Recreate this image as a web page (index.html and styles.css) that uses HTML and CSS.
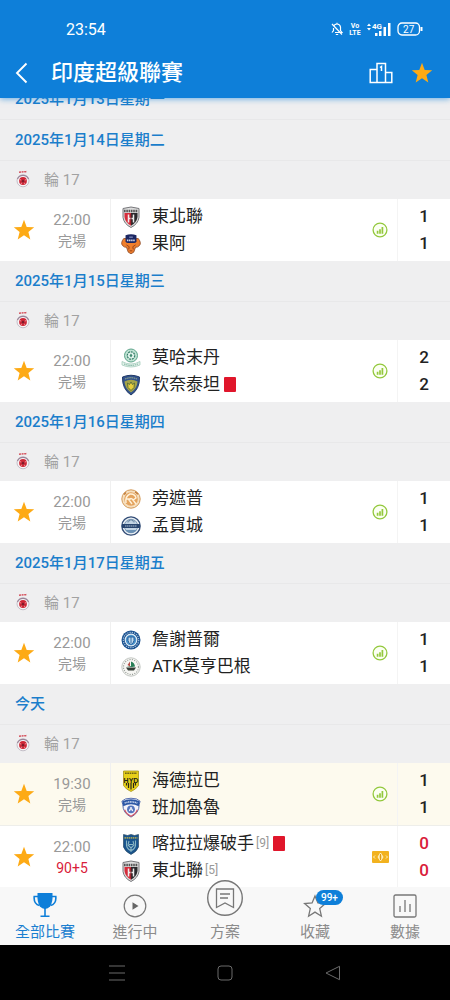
FILE: index.html
```html
<!DOCTYPE html>
<html lang="zh-Hant">
<head>
<meta charset="utf-8">
<meta name="viewport" content="width=device-width, initial-scale=1">
<title>印度超級聯賽</title>
<link rel="stylesheet" href="styles.css">
</head>
<body>
<svg class="sprite" aria-hidden="true">
  <symbol id="star" viewBox="0 0 22 22"><path fill="#fdaa15" d="M11 .8l2.7 7.1 7.5.4-5.8 4.8 1.9 7.3L11 16.3l-6.3 4.1 1.9-7.3L.8 8.3l7.5-.4z"/></symbol>
  <symbol id="isl" viewBox="0 0 16 18">
    <path d="M4 2.200l8-.6" stroke="#d65560" stroke-width="1.500" stroke-dasharray="2 .6"/>
    <circle cx="8" cy="10.800" r="6" fill="#f7f5f6" stroke="#c4bfc8" stroke-width="1"/>
    <path d="M2.500 9a6 6 0 0 1 11 0" fill="none" stroke="#9a8498" stroke-width="1.200"/>
    <circle cx="8" cy="11" r="3.900" fill="#cf2636"/>
    <path d="M8 9.600l1.400 1.100-.5 1.700H7.100l-.5-1.700z" fill="#7d1b2a"/>
    <path d="M4.700 9.500l1.500.6M11.300 9.500l-1.500.6M6 14l.8-1.300M10 14l-.8-1.300" stroke="#f3c8cc" stroke-width=".7"/>
  </symbol>
  <symbol id="stats" viewBox="0 0 16 16">
    <circle cx="8" cy="8" r="6.900" fill="#fbfff2" stroke="#93c83d" stroke-width="1.300"/>
    <path d="M5.600 8.800v3M8 7.200v4.600M10.400 5v6.800" stroke="#93c83d" stroke-width="1.700"/>
  </symbol>
  <symbol id="northeast" viewBox="0 0 20 22">
    <path d="M2 2.5Q10-.5 18 2.5v9Q17 18 10 21.500 3 18 2 11.500z" fill="#ddd" stroke="#77777b"/>
    <path d="M3.500 7H10v12.700Q4.300 16.500 3.500 11z" fill="#d52c3b"/>
    <path d="M10 7h6.500v4Q15.700 16.500 10 19.700z" fill="#29292c"/>
    <path d="M3 5h14" stroke="#555" stroke-width="2.400" stroke-dasharray="1.600 .7"/>
    <path d="M7.500 8.500v8M12.500 8.500v8M7.500 12.500h5" stroke="#eee" stroke-width="1.500"/>
    <path d="M10 8v10" stroke="#6b2026" stroke-width="1"/>
  </symbol>
  <symbol id="goa" viewBox="0 0 22 22">
    <path d="M3 5Q-1 10 2 13q2 2 4 1.500L8 20l3 1.800L14 20l2-5.500q2 .5 4-1.500 3-3-1-8z" fill="#f07f2c" stroke="#8c4a29" stroke-width=".9"/>
    <path d="M5 1.500Q11-.8 17 1.500V8q0 2-2.500 2h-7Q5 10 5 8z" fill="#1c2763"/>
    <path d="M6.500 7h9" stroke="#d1d4e6" stroke-width="2" stroke-dasharray="1.700 .6"/>
    <path d="M9 3.500h4" stroke="#7882b5" stroke-width="1.500"/>
    <path d="M6 12l3 2-.5 3M16 12l-3 2 .5 3M9.500 18.500h3" fill="none" stroke="#91401d"/>
  </symbol>
  <symbol id="mohammedan" viewBox="0 0 20 20">
    <circle cx="10" cy="7.500" r="6.500" fill="#bfe2d3" stroke="#5ea58b"/>
    <circle cx="10" cy="7.500" r="3.700" fill="#e5f5ee" stroke="#347d67" stroke-width="1.200" stroke-dasharray="2 .8"/>
    <path d="M8.500 7.500l1.500-2 1.500 2-1.500 2z" fill="#438b73"/>
    <path d="M1 13.500q9 5 18 0v3.500q-9 4-18 0z" fill="#e3f1ea" stroke="#9bc7b6" stroke-width=".7"/>
    <path d="M3 16q7 2.800 14 0" fill="none" stroke="#6faa95" stroke-dasharray="1.400 .8"/>
  </symbol>
  <symbol id="chennai" viewBox="0 0 20 22">
    <path d="M1.500 3Q10-.5 18.500 3 19 15 10 21 1 15 1.500 3z" fill="#33538d" stroke="#213a68"/>
    <path d="M3.500 7.500Q10 4 16.500 7.500 16 14.500 10 18.500 4 14.500 3.500 7.500z" fill="#a5a448"/>
    <path d="M4 5q6-2.500 12 0" stroke="#a7bb8b" stroke-dasharray="1.500 .7" fill="none"/>
    <path d="M6.500 9l2 1.500L10 8l1.500 2.500 2-1.500-.5 4.500-3 3-3-3z" fill="#e5cd3c" stroke="#4a6238" stroke-width=".8"/>
  </symbol>
  <symbol id="punjab" viewBox="0 0 20 20">
    <circle cx="10" cy="10" r="9.200" fill="#f5dfbf" stroke="#d49a59"/>
    <circle cx="10" cy="10" r="6.800" fill="#e4a35e"/>
    <path d="M3 5.500l2-2M14 2.800l3 2.500" stroke="#bf7b3a" stroke-width="1.400"/>
    <path d="M5 14q-1-7 4-9 5-.5 6 4l-3 2q-2-3-4 0l3 4M12 11l3 4M5 10h5" fill="none" stroke="#fff2da" stroke-width="1.400"/>
  </symbol>
  <symbol id="mumbai" viewBox="0 0 20 20">
    <circle cx="10" cy="10" r="9.200" fill="#e9eff4" stroke="#334d77" stroke-width="1.300"/>
    <circle cx="10" cy="10" r="6.700" fill="#c3d4e4" stroke="#819bb5"/>
    <path d="M4.300 14a7 7 0 0 0 11.400 0z" fill="#6a91b5"/>
    <path d="M1 8h18v4H1z" fill="#29456f"/><path d="M4 10h12" stroke="#a7bbcd" stroke-width="1.200" stroke-dasharray="1.500 .5"/>
    <path d="M7 6.500V5h1.500V4h3v1H13v1.500" fill="none" stroke="#6d89a5"/>
  </symbol>
  <symbol id="jamshedpur" viewBox="0 0 20 20">
    <circle cx="10" cy="10" r="9.500" fill="#174f8f"/>
    <circle cx="10" cy="10" r="7.700" fill="none" stroke="#a4bdd8" stroke-width="1.200" stroke-dasharray="1.300 1"/>
    <circle cx="10" cy="10" r="5.800" fill="#4a93cc" stroke="#e5eef5" stroke-width="1.200"/>
    <path d="M7 7h6v3.500q0 2.500-3 4-3-1.500-3-4z" fill="#c3dbed" stroke="#215c9c"/><path d="M10 7v6" stroke="#326ca7"/>
  </symbol>
  <symbol id="atk" viewBox="0 0 20 20">
    <circle cx="10" cy="10" r="9.200" fill="#f6f6f3" stroke="#c3c7c3"/>
    <circle cx="10" cy="10" r="7.500" fill="none" stroke="#999f9a" stroke-width="1.200" stroke-dasharray="1.100 1.300"/>
    <path d="M5.500 9.500L10 9V4.500q3.500 1 4 5l-3 .5z" fill="#267e56"/>
    <path d="M9 4.500v5L6.500 8z" fill="#b64c46"/><path d="M5 10.500h10l-2 3H7z" fill="#343d36"/>
  </symbol>
  <symbol id="bengaluru" viewBox="0 0 22 22">
    <path d="M1 3.500L5 1q6-1.500 12 0l4 2.500-1 4q0 9-9 13.500Q2 16.500 2 7.500z" fill="#f3f3fa" stroke="#4560a9"/>
    <path d="M1.500 3.500Q11-.5 20.500 3.500l-1 5.500Q11 5 2.500 9z" fill="#2b57a5"/>
    <path d="M4 5.500q7-2.500 14 0" fill="none" stroke="#cfdaef" stroke-width="1.700" stroke-dasharray="1.300 .6"/>
    <circle cx="11" cy="12.500" r="4.300" fill="#5475bd"/><path d="M9 14.500l2-4.500 2 4.500M9.500 13h3" stroke="#fff" fill="none"/>
    <path d="M4 13q2 5 7 7 5-2 7-7" fill="none" stroke="#d6505d" stroke-width="1.200"/>
  </symbol>
  <symbol id="kerala" viewBox="0 0 20 22">
    <path d="M2.500 1.500l4 1 3.500-1 3.500 1 4-1V14Q16 18.500 10 21.500 4 18.500 2.500 14z" fill="#19548d" stroke="#2a4b66" stroke-width=".7"/>
    <path d="M3.500 4.800h13" stroke="#a1a05b" stroke-width="1.800" stroke-dasharray="1.500 .6"/>
    <path d="M5.500 7.500v5q1 4 4.500 5 3.500-1 4.500-5v-5M8 8l-1 4 3 3 3-3-1-4M8 11.500h4M10 15v4" fill="none" stroke="#8ab6c4" stroke-width="1.100"/>
  </symbol>
</svg>

<header class="header">
  <div class="status">
    <span class="clock">23:54</span>
    <div class="status-icons">
      <svg width="12" height="14" viewBox="0 0 12 14" fill="none" stroke="#fff" stroke-width="1.200"><path d="M2.500 5Q3 2 6 2t3.500 3v3.500L11 10.500H4M2.500 6v2.500L1 10.500M4.800 12.500h2.400M6 2V.8M1 2l10 10.500"/></svg>
      <svg width="12" height="14" viewBox="0 0 12 14"><text class="volte" x="6" y="6" text-anchor="middle">Vo</text><text class="volte" x="6" y="13" text-anchor="middle">LTE</text></svg>
      <svg width="24" height="16" viewBox="0 0 24 16" fill="#fff"><path d="M0 5l2-2.500L4 5zM0 7l2 2.500L4 7z"/><text class="network" x="5" y="8">4G</text><path d="M8 12h2.500v3H8zM12 10h2.500v5H12zM16.500 6H19v9h-2.500zM21 2h2.500v13H21z"/></svg>
      <svg width="26" height="14" viewBox="0 0 26 14" fill="none" stroke="#fff" stroke-width="1.300"><rect x="1" y="1" width="21.500" height="12" rx="4"/><path d="M24.500 5v4" stroke-width="2"/><text class="battery" x="11.700" y="10.500" text-anchor="middle">27</text></svg>
    </div>
  </div>
  <div class="titlebar">
    <button class="icon-button" aria-label="返回"><svg width="14" height="22" viewBox="0 0 14 22" fill="none" stroke="#fff" stroke-width="1.900"><path d="M11.500 1.500L2 11l9.500 9.500"/></svg></button>
    <h1>印度超級聯賽</h1>
    <div class="actions">
      <button class="icon-button" aria-label="積分榜"><svg width="24" height="22" viewBox="0 0 24 22" fill="none" stroke="#fff" stroke-width="1.500"><path d="M8 20.500V1.500h8.500v19M8 7.500H1.200v13h21.600v-10h-6.300"/><path d="M11 5.500l1.500-1V9"/></svg></button>
      <button class="icon-button" aria-label="收藏聯賽"><svg width="22" height="22"><use href="#star"/></svg></button>
    </div>
  </div>
</header>

<main class="viewport">
  <div class="list">
    <h2 class="date">2025年1月13日星期一</h2>

    <h2 class="date">2025年1月14日星期二</h2>
    <div class="round"><svg width="16" height="18"><use href="#isl"/></svg>輪 17</div>
    <article class="match">
      <button class="fav" aria-label="收藏"><svg width="22" height="22"><use href="#star"/></svg></button>
      <div class="when"><time>22:00</time><span>完場</span></div>
      <div class="teams">
        <div class="team"><svg><use href="#northeast"/></svg>東北聯</div>
        <div class="team"><svg><use href="#goa"/></svg>果阿</div>
      </div>
      <svg class="info" width="16" height="16"><use href="#stats"/></svg>
      <div class="score"><span>1</span><span>1</span></div>
    </article>

    <h2 class="date">2025年1月15日星期三</h2>
    <div class="round"><svg width="16" height="18"><use href="#isl"/></svg>輪 17</div>
    <article class="match">
      <button class="fav" aria-label="收藏"><svg width="22" height="22"><use href="#star"/></svg></button>
      <div class="when"><time>22:00</time><span>完場</span></div>
      <div class="teams">
        <div class="team"><svg><use href="#mohammedan"/></svg>莫哈末丹</div>
        <div class="team"><svg><use href="#chennai"/></svg>钦奈泰坦<i class="red-card"></i></div>
      </div>
      <svg class="info" width="16" height="16"><use href="#stats"/></svg>
      <div class="score"><span>2</span><span>2</span></div>
    </article>

    <h2 class="date">2025年1月16日星期四</h2>
    <div class="round"><svg width="16" height="18"><use href="#isl"/></svg>輪 17</div>
    <article class="match">
      <button class="fav" aria-label="收藏"><svg width="22" height="22"><use href="#star"/></svg></button>
      <div class="when"><time>22:00</time><span>完場</span></div>
      <div class="teams">
        <div class="team"><svg><use href="#punjab"/></svg>旁遮普</div>
        <div class="team"><svg><use href="#mumbai"/></svg>孟買城</div>
      </div>
      <svg class="info" width="16" height="16"><use href="#stats"/></svg>
      <div class="score"><span>1</span><span>1</span></div>
    </article>

    <h2 class="date">2025年1月17日星期五</h2>
    <div class="round"><svg width="16" height="18"><use href="#isl"/></svg>輪 17</div>
    <article class="match">
      <button class="fav" aria-label="收藏"><svg width="22" height="22"><use href="#star"/></svg></button>
      <div class="when"><time>22:00</time><span>完場</span></div>
      <div class="teams">
        <div class="team"><svg><use href="#jamshedpur"/></svg>詹謝普爾</div>
        <div class="team"><svg><use href="#atk"/></svg>ATK莫亨巴根</div>
      </div>
      <svg class="info" width="16" height="16"><use href="#stats"/></svg>
      <div class="score"><span>1</span><span>1</span></div>
    </article>

    <h2 class="date">今天</h2>
    <div class="round"><svg width="16" height="18"><use href="#isl"/></svg>輪 17</div>
    <article class="match highlight">
      <button class="fav" aria-label="收藏"><svg width="22" height="22"><use href="#star"/></svg></button>
      <div class="when"><time>19:30</time><span>完場</span></div>
      <div class="teams">
        <div class="team">
          <svg viewBox="0 0 20 22">
            <path d="M2.500 1h15v14.500Q15 19.500 10 21.500 5 19.500 2.500 15.500z" fill="#e7cf18" stroke="#a69419" stroke-width=".8"/>
            <path d="M4 3.300h12" stroke="#716517" stroke-width="1.600" stroke-dasharray="1.700 .6"/>
            <text x="10" y="13" text-anchor="middle" class="crest-text">HYD</text>
            <path d="M5.500 13v2.500M7.500 13v5M10 13v6.500M12.500 13v5M14.500 13v2.500" stroke="#292819" stroke-width="1.200"/>
          </svg>海德拉巴</div>
        <div class="team"><svg><use href="#bengaluru"/></svg>班加魯魯</div>
      </div>
      <svg class="info" width="16" height="16"><use href="#stats"/></svg>
      <div class="score"><span>1</span><span>1</span></div>
    </article>
    <article class="match live">
      <button class="fav" aria-label="收藏"><svg width="22" height="22"><use href="#star"/></svg></button>
      <div class="when"><time>22:00</time><span>90+5</span></div>
      <div class="teams">
        <div class="team"><svg><use href="#kerala"/></svg>喀拉拉爆破手<small>[9]</small><i class="red-card"></i></div>
        <div class="team"><svg><use href="#northeast"/></svg>東北聯<small>[5]</small></div>
      </div>
      <svg class="info" width="17" height="12" viewBox="0 0 17 12"><rect width="17" height="12" rx="1" fill="#f2b21f"/><path d="M6 6l2.500-4L11 6l-2.500 4z" fill="#ffe28a" stroke="#fff3cd"/><path d="M8.500 3v6" stroke="#dc9a18" stroke-width="1.200"/><path d="M3 4.500L1.500 6 3 7.500M14 4.500L15.500 6 14 7.500" fill="none" stroke="#fff0c0"/></svg>
      <div class="score"><span>0</span><span>0</span></div>
    </article>
  </div>
</main>

<nav class="tabs" aria-label="主選單">
  <a href="#all" class="active"><span class="tab-icon"><svg width="24" height="26" viewBox="0 0 24 26"><path d="M4.500 1h15q.5 10-2.500 13.500-2 2-5 2.500-3-.5-5-2.500Q4 11 4.500 1z" fill="#0e7fd9"/><path d="M5 4.500H1.200Q.5 12 6.500 13.500M19 4.500h3.800Q23.500 12 17.500 13.500M12 16v8M7.500 24.300h9" fill="none" stroke="#0e7fd9" stroke-width="1.600"/></svg></span>全部比賽</a>
  <a href="#live"><span class="tab-icon"><svg width="24" height="24" viewBox="0 0 24 24"><circle cx="12" cy="12" r="10.800" fill="none" stroke="#777" stroke-width="1.200"/><path d="M9.500 8.300l6 3.700-6 3.700z" fill="#666"/></svg></span>進行中</a>
  <a href="#plan"><span class="tab-icon"><svg width="38" height="38" viewBox="0 0 38 38"><circle cx="19" cy="18" r="17.300" fill="#f8f8f8" stroke="#777" stroke-width="1.400"/><path d="M10.500 9h17v18.500L19 23l-8.500 4.500zM14 14h10M14 18h8" fill="none" stroke="#777" stroke-width="1.300"/></svg></span>方案</a>
  <a href="#saved"><span class="tab-icon"><svg width="24" height="24" viewBox="0 0 24 24"><path d="M12 2l2.900 7 7.500.6-5.700 5 1.700 7.600L12 18.100l-6.400 4.100 1.700-7.600-5.700-5L9.100 9z" fill="none" stroke="#777" stroke-width="1.300"/></svg><b class="badge">99+</b></span>收藏</a>
  <a href="#data"><span class="tab-icon"><svg width="24" height="24" viewBox="0 0 24 24" fill="none" stroke="#777" stroke-width="1.300"><rect x="1" y="1" width="22" height="22" rx="1.500"/><path d="M7 12v6M12 6v12M17 10v8"/></svg></span>數據</a>
</nav>

<div class="system">
  <button aria-label="最近"><svg width="16" height="16" viewBox="0 0 16 16"><path d="M0 1h16M0 8h16M0 15h16"/></svg></button>
  <button aria-label="主頁"><svg width="16" height="16" viewBox="0 0 16 16"><rect x="1" y="1" width="14" height="14" rx="3"/></svg></button>
  <button aria-label="上一頁"><svg width="16" height="16" viewBox="0 0 16 16"><path d="M14.500 1.300v13.400L1 8z"/></svg></button>
</div>
</body>
</html>
```

FILE: styles.css
```css
* { box-sizing: border-box; }

body {
  margin: 0;
  height: 100vh;
  display: flex;
  flex-direction: column;
  background: #efeff0;
  color: #222;
  font-family: Roboto, "Noto Sans CJK TC", sans-serif;
}

svg { display: block; flex: none; }
button { border: 0; padding: 0; background: none; cursor: pointer; font: inherit; }
h1, h2 { margin: 0; }

.sprite { position: absolute; width: 0; height: 0; }
.crest-text { font: bold 7px "Liberation Sans", sans-serif; fill: #222217; }
.volte { font: bold 7px Roboto, sans-serif; fill: #fff; }
.network { font: bold 8px Roboto, sans-serif; fill: #fff; }
.battery { font: 10px Roboto, sans-serif; fill: #fff; stroke: none; }

.header {
  position: relative;
  z-index: 1;
  flex: none;
  color: #fff;
  background: #0e7fd9;
  box-shadow: 0 1px 6px rgba(14, 127, 217, 0.6);
}

.status {
  display: flex;
  align-items: center;
  justify-content: space-between;
  height: 48px;
  padding: 10px 27px 0 66px;
}

.clock { font-size: 16px; }
.status-icons { display: flex; align-items: center; gap: 6px; }

.titlebar {
  display: flex;
  align-items: center;
  gap: 22px;
  height: 50px;
  padding: 0 17px 0 15px;
}

.titlebar h1 { flex: 1; font-size: 22px; font-weight: 500; line-height: 32px; }
.actions { display: flex; gap: 18px; }

.viewport { flex: 1; min-height: 0; overflow: hidden; }
.list { margin-top: -19px; }

.date {
  height: 41px;
  padding-left: 15px;
  border-bottom: 1px solid #e8e8e9;
  color: #1b7ecb;
  font-size: 15px;
  font-weight: 500;
  line-height: 41px;
}

.round {
  display: flex;
  align-items: center;
  gap: 13px;
  height: 38px;
  padding: 0 0 3px 15px;
  color: #a2a2a2;
  font-size: 15px;
}

.match {
  display: grid;
  grid-template-columns: 34px 76px 1fr 34px 53px;
  align-items: stretch;
  background: #fff;
}

.match.highlight { background: #fdfaee; border-bottom: 1px solid #eeeeea; }

.fav { display: flex; align-items: center; justify-content: flex-end; }
.fav svg { margin-right: -1px; }

.when {
  display: flex;
  flex-direction: column;
  align-items: center;
  justify-content: center;
  padding-top: 2px;
  color: #999;
  font-size: 14px;
  line-height: 21px;
}

.when time { font-size: 15px; }

.teams {
  padding: 4px 0 4px 10px;
  border-left: 1px solid #f0f0f0;
  font-size: 17px;
}

.team { display: flex; align-items: center; height: 27px; line-height: 27px; white-space: nowrap; }
.team svg { width: 20px; height: 22px; margin-right: 11px; }
.team small { margin-left: 2px; color: #999; font-size: 12px; }

.red-card {
  width: 12px;
  height: 15px;
  margin-left: 4px;
  border-radius: 1px;
  background: #e0162b;
}

.info { align-self: center; justify-self: center; }

.score {
  display: flex;
  flex-direction: column;
  align-items: center;
  padding: 4px 0;
  border-left: 1px solid #f4f4f4;
  font-size: 17px;
  font-weight: 500;
  line-height: 27px;
}

.live .when span, .live .score { color: #d9203a; }

.tabs {
  position: relative;
  z-index: 1;
  flex: none;
  display: grid;
  grid-template-columns: repeat(5, 1fr);
  height: 58px;
  background: #f8f8f8;
}

.tabs a {
  display: flex;
  flex-direction: column;
  align-items: center;
  padding-top: 5px;
  color: #8b8b8b;
  font-size: 15px;
  line-height: 22px;
  text-decoration: none;
}

.tabs .active { color: #1b7fd0; }

.tab-icon {
  position: relative;
  display: flex;
  align-items: flex-end;
  justify-content: center;
  height: 26px;
  margin-bottom: 3px;
}

.badge {
  position: absolute;
  left: 13px;
  top: -2px;
  padding: 0 5px;
  border-radius: 8px;
  background: #0e7fd9;
  color: #fff;
  font-size: 10px;
  font-weight: 500;
  line-height: 15px;
}

.system {
  flex: none;
  display: flex;
  align-items: center;
  justify-content: center;
  gap: 92px;
  height: 55px;
  background: #000;
}

.system svg { fill: none; stroke: #6b6b6b; stroke-width: 1; }
```
